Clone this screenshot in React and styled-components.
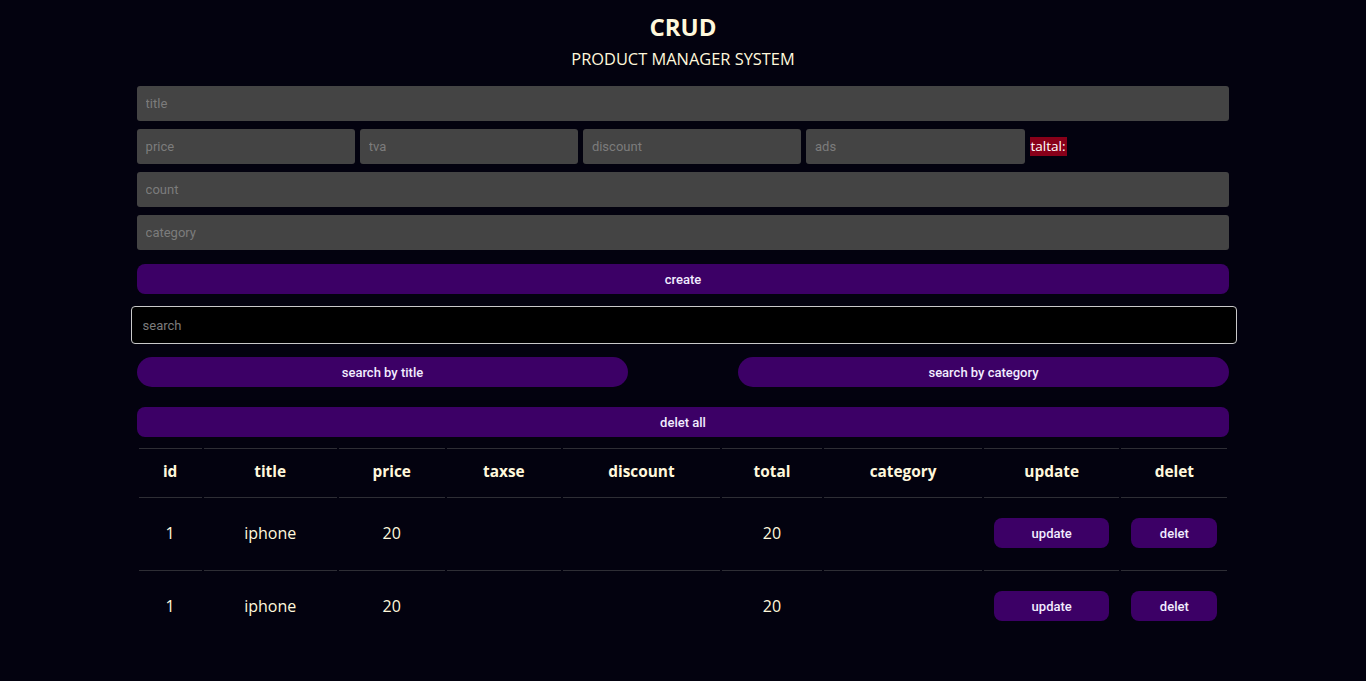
import React from "react";
import styled, { createGlobalStyle } from "styled-components";

const Global = createGlobalStyle`
  html, body {
    margin: 0;
    background: #03020f;
    color: cornsilk;
    font-family: "Open Sans", "Noto Sans", sans-serif;
  }
  * { box-sizing: border-box; }
`;

const Crud = styled.div`
  width: 80%;
  margin: 0 auto;
  padding-top: 12px;
`;

const Head = styled.div`
  text-align: center;
  h2 {
    margin: 0;
    font-size: 24px;
    line-height: 30px;
    font-weight: 700;
  }
  p {
    margin: 6px 0 0;
    font-size: 16.4px;
    line-height: 22px;
  }
`;

const Inputs = styled.div`
  margin-top: 16px;
  display: flex;
  flex-direction: column;
  gap: 8px;
`;

const Field = styled.input`
  display: block;
  width: ${(p) => p.$w || "100%"};
  height: 35px;
  border: none;
  outline: none;
  border-radius: 3px;
  background: #444;
  color: #ddd;
  padding: 0 9px;
  font-family: Roboto, "Liberation Sans", sans-serif;
  font-size: 13px;
  &::placeholder { color: #7c7c7c; }
`;

const Price = styled.div`
  display: flex;
  align-items: center;
  gap: 4.6px;
`;

const Total = styled.small`
  background: #880019;
  color: #fff;
  font-size: 13.5px;
  font-weight: 500;
  padding: 0 1px;
  line-height: 19px;
  margin-left: 0.4px;
`;

const Btn = styled.button`
  display: block;
  width: ${(p) => p.$w || "100%"};
  height: 30px;
  border: none;
  border-radius: ${(p) => (p.$round ? "15px" : "8px")};
  background: #3c0066;
  color: #f1ecff;
  font-family: Roboto, "Liberation Sans", sans-serif;
  font-size: 13px;
  font-weight: 500;
  cursor: pointer;
`;

const Create = styled(Btn)`
  margin-top: 14px;
`;

const Search = styled.input`
  display: block;
  width: calc(100% + 14px);
  margin: 12px -6px 13px;
  height: 38px;
  background: #000;
  border: 1px solid #c9c9c9;
  border-radius: 4px;
  outline: none;
  color: #ddd;
  padding: 0 11px;
  font-family: Roboto, "Liberation Sans", sans-serif;
  font-size: 13px;
  &::placeholder { color: #7c7c7c; }
`;

const SearchBtns = styled.div`
  display: flex;
  justify-content: space-between;
`;

const DeleteAll = styled(Btn)`
  margin-top: 20px;
`;

const Table = styled.table`
  width: 100%;
  margin-top: 9px;
  border-spacing: 2px;
  table-layout: fixed;
  text-align: center;
  th, td {
    border-top: 1px solid #2e2e35;
  }
  th {
    padding: 13px 4px 14px;
    font-size: 15.4px;
    font-weight: 700;
    line-height: 19px;
  }
  td {
    padding: 20px 4px;
    font-size: 16px;
    line-height: 30px;
    font-weight: 400;
  }
`;

const RowBtn = styled(Btn)`
  margin: 0 auto;
`;

const cols = [63, 133, 106, 114, 157, 100, 158, 135, 106];
const heads = ["id", "title", "price", "taxse", "discount", "total", "category", "update", "delet"];

const products = [
  { id: 1, title: "iphone", price: 20, total: 20 },
  { id: 1, title: "iphone", price: 20, total: 20 },
];

export default function App() {
  return (
    <Crud>
      <Global />
      <Head>
        <h2>CRUD</h2>
        <p>PRODUCT MANAGER SYSTEM</p>
      </Head>
      <Inputs>
        <Field placeholder="title" />
        <Price>
          <Field $w="20%" placeholder="price" />
          <Field $w="20%" placeholder="tva" />
          <Field $w="20%" placeholder="discount" />
          <Field $w="20%" placeholder="ads" />
          <Total>taltal:</Total>
        </Price>
        <Field placeholder="count" />
        <Field placeholder="category" />
      </Inputs>
      <Create>create</Create>
      <Search placeholder="search" />
      <SearchBtns>
        <Btn $w="45%" $round>search by title</Btn>
        <Btn $w="45%" $round>search by category</Btn>
      </SearchBtns>
      <DeleteAll>delet all</DeleteAll>
      <Table>
        <colgroup>
          {cols.map((w, i) => (
            <col key={i} style={{ width: w }} />
          ))}
        </colgroup>
        <thead>
          <tr>
            {heads.map((h) => (
              <th key={h}>{h}</th>
            ))}
          </tr>
        </thead>
        <tbody>
          {products.map((p, i) => (
            <tr key={i}>
              <td>{p.id}</td>
              <td>{p.title}</td>
              <td>{p.price}</td>
              <td></td>
              <td></td>
              <td>{p.total}</td>
              <td></td>
              <td>
                <RowBtn $w="115px">update</RowBtn>
              </td>
              <td>
                <RowBtn $w="86px">delet</RowBtn>
              </td>
            </tr>
          ))}
        </tbody>
      </Table>
    </Crud>
  );
}
